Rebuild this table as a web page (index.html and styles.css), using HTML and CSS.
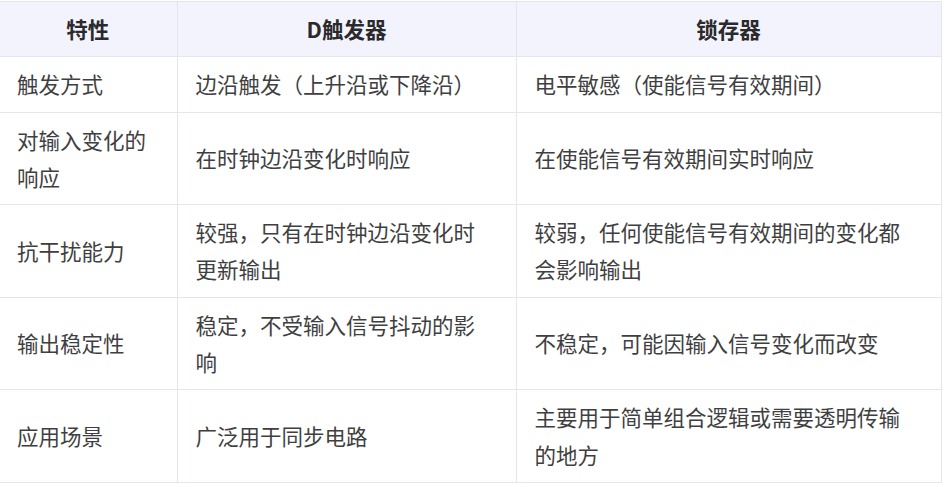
FILE: index.html
```html
<!DOCTYPE html>
<html lang="zh-CN">
<head>
<meta charset="utf-8">
<link rel="stylesheet" href="styles.css">
</head>
<body>
<div class="wrap">
<table class="cmp">
  <colgroup>
    <col class="c1"><col class="c2"><col class="c3">
  </colgroup>
  <thead>
    <tr><th>特性</th><th>D触发器</th><th>锁存器</th></tr>
  </thead>
  <tbody>
    <tr><td>触发方式</td><td>边沿触发（上升沿或下降沿）</td><td>电平敏感（使能信号有效期间）</td></tr>
    <tr><td>对输入变化的响应</td><td>在时钟边沿变化时响应</td><td>在使能信号有效期间实时响应</td></tr>
    <tr><td>抗干扰能力</td><td>较强，只有在时钟边沿变化时更新输出</td><td>较弱，任何使能信号有效期间的变化都会影响输出</td></tr>
    <tr><td>输出稳定性</td><td>稳定，不受输入信号抖动的影响</td><td>不稳定，可能因输入信号变化而改变</td></tr>
    <tr><td>应用场景</td><td>广泛用于同步电路</td><td>主要用于简单组合逻辑或需要透明传输的地方</td></tr>
  </tbody>
</table>
</div>
</body>
</html>
```

FILE: styles.css
```css
html, body {
  margin: 0;
  padding: 0;
  background: #ffffff;
}
.wrap {
  padding-top: 1px;
}
.cmp {
  border-collapse: collapse;
  width: 941px;
  table-layout: fixed;
  font-family: "Noto Sans CJK SC", "Noto Sans", sans-serif;
  font-size: 21.5px;
  line-height: 37.3px;
  color: #3f3f42;
}
.c1 { width: 177px; }
.c2 { width: 339px; }
.c3 { width: 425px; }
.cmp th, .cmp td {
  border: 1px solid #e4e5f0;
  padding: 8px 24px 9px 18px;
  vertical-align: middle;
}
.cmp th:first-child, .cmp td:first-child {
  border-left: none;
  padding-left: 17px;
  padding-right: 18px;
}
.cmp th {
  background: #f3f3fd;
  font-weight: 700;
  text-align: center;
  padding-right: 18px;
  color: #2a2a2c;
}
.cmp td {
  text-align: left;
}
```
